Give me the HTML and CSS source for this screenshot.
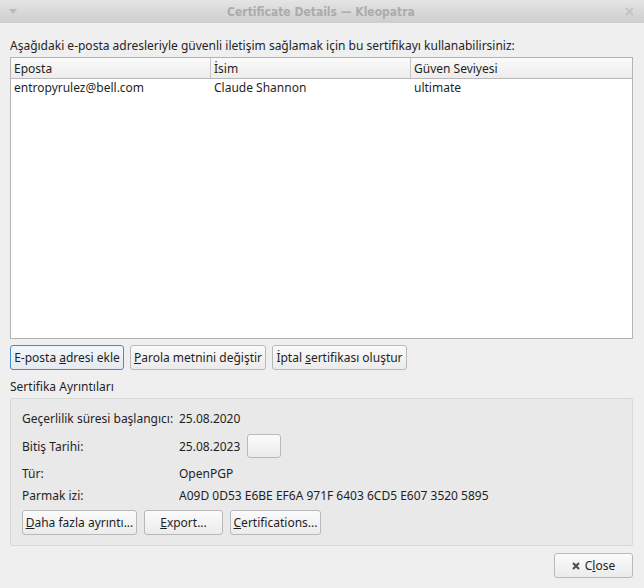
FILE: index.html
```html
<!DOCTYPE html>
<html lang="tr">
<head>
<meta charset="utf-8">
<link rel="stylesheet" href="styles.css">
</head>
<body>
<div class="window">
  <div class="titlebar">
    <svg class="tb-menu" width="8" height="5" viewBox="0 0 8 5"><path d="M0 0 L8 0 L4 5 Z" fill="#b8b8b8"/></svg>
    <div class="tb-title">Certificate Details — Kleopatra</div>
    <svg class="tb-close" width="9" height="9" viewBox="0 0 9 9"><path d="M1 1 L8 8 M8 1 L1 8" stroke="#c4c4c4" stroke-width="1.8"/></svg>
  </div>
  <div class="content">
    <div class="intro">Aşağıdaki e-posta adresleriyle güvenli iletişim sağlamak için bu sertifikayı kullanabilirsiniz:</div>
    <div class="list">
      <div class="list-head">
        <div class="col c1">Eposta</div>
        <div class="col c2">İsim</div>
        <div class="col c3">Güven Seviyesi</div>
      </div>
      <div class="list-row">
        <div class="col c1">entropyrulez@bell.com</div>
        <div class="col c2">Claude Shannon</div>
        <div class="col c3">ultimate</div>
      </div>
    </div>
    <div class="btn-row">
      <button class="btn focus b-add"><span>E-posta <u>a</u>dresi ekle</span></button>
      <button class="btn b-pass"><span><u>P</u>arola metnini değiştir</span></button>
      <button class="btn b-revoke"><span>İptal <u>s</u>ertifikası oluştur</span></button>
    </div>
    <div class="group-title">Sertifika Ayrıntıları</div>
    <div class="group">
      <div class="details">
        <div class="lbl">Geçerlilik süresi başlangıcı:</div><div class="val">25.08.2020</div>
        <div class="lbl">Bitiş Tarihi:</div><div class="val"><span>25.08.2023</span><button class="btn small-btn"></button></div>
        <div class="lbl">Tür:</div><div class="val">OpenPGP</div>
        <div class="lbl">Parmak izi:</div><div class="val">A09D 0D53 E6BE EF6A 971F 6403 6CD5 E607 3520 5895</div>
      </div>
      <div class="btn-row inner">
        <button class="btn b-more"><span><u>D</u>aha fazla ayrıntı...</span></button>
        <button class="btn b-export"><span><u>E</u>xport...</span></button>
        <button class="btn b-cert"><span><u>C</u>ertifications...</span></button>
      </div>
    </div>
    <div class="footer">
      <button class="btn close"><svg width="8" height="8" viewBox="0 0 8 8"><path d="M1 1 L7 7 M7 1 L1 7" stroke="#4a4a4a" stroke-width="2"/></svg><span>C<u>l</u>ose</span></button>
    </div>
  </div>
</div>
</body>
</html>
```
FILE: styles.css
```css
* { box-sizing: border-box; }
html, body { margin: 0; padding: 0; }
body {
  width: 644px; height: 588px; overflow: hidden;
  font-family: "Noto Sans", "DejaVu Sans", sans-serif;
  font-size: 12px;
  color: #1f1f1f;
  background: #efefef;
}
.window { width: 644px; height: 588px; display: flex; flex-direction: column; }
.titlebar {
  height: 23px;
  background: linear-gradient(#e4e4e4, #cecece);
  display: flex; align-items: center;
  padding: 0 10px 0 9px;
}
.tb-menu { margin-top: -1px; }
.tb-title {
  flex: 1; text-align: center; color: #ababab;
  font-family: "DejaVu Sans Condensed", "DejaVu Sans", sans-serif;
  font-stretch: condensed;
  font-weight: bold; font-size: 12px;
}
.tb-close { margin-top: -1px; }
.content { flex: 1; padding: 14px 11px 10px 10px; display: flex; flex-direction: column; }
.intro { line-height: 17px; }
.list {
  margin-top: 3px;
  height: 282px;
  border: 1px solid #b3b3b3;
  background: #ffffff;
}
.list-head {
  display: flex; height: 21px;
  background: linear-gradient(#fafafa, #ececec);
  border-bottom: 1px solid #b8b8b8;
}
.list-head .col { line-height: 20px; padding-top: 1px; height: 20px; }
.list-row { display: flex; height: 18px; }
.col { padding-left: 3px; white-space: nowrap; }
.list-row .col { line-height: 18px; }
.c1 { width: 200px; }
.c2 { width: 200px; }
.c3 { flex: 1; }
.list-head .col { border-right: 1px solid #c8c8c8; }
.list-head .c3 { border-right: none; }
.btn {
  font: inherit; color: #1f1f1f;
  height: 25px;
  padding: 0;
  border: 1px solid #b9b9b9;
  border-radius: 3px;
  background: linear-gradient(#fbfbfb, #ebebeb);
  display: inline-flex; align-items: center; justify-content: center;
  white-space: nowrap;
}
.btn.focus { border-color: #3d8fcf; background: linear-gradient(#f4f7fa, #e4eaf0); }
.btn-row { display: flex; gap: 6px; margin-top: 6px; }
.b-add { width: 114px; }
.b-pass { width: 136px; }
.b-revoke { width: 135px; }
.group-title { margin-top: 8px; line-height: 17px; }
.group {
  margin-top: 3px;
  border: 1px solid #d8d8d8;
  border-radius: 2px;
  background: #e9e9e9;
  padding: 9px 11px 10px 11px;
}
.details {
  display: grid;
  grid-template-columns: 157px 1fr;
  grid-template-rows: 21px 34px 20px 24px;
  align-items: center;
  white-space: nowrap;
}
.val { display: flex; align-items: center; gap: 7px; }
.small-btn { width: 34px; height: 24px; padding: 0; }
.btn-row.inner { margin-top: 3px; gap: 7px; }
.b-more { width: 115px; }
.b-export { width: 79px; }
.b-cert { width: 91px; }
.footer { display: flex; justify-content: flex-end; margin-top: 7px; }
.btn.close { width: 79px; gap: 5px; }
```
